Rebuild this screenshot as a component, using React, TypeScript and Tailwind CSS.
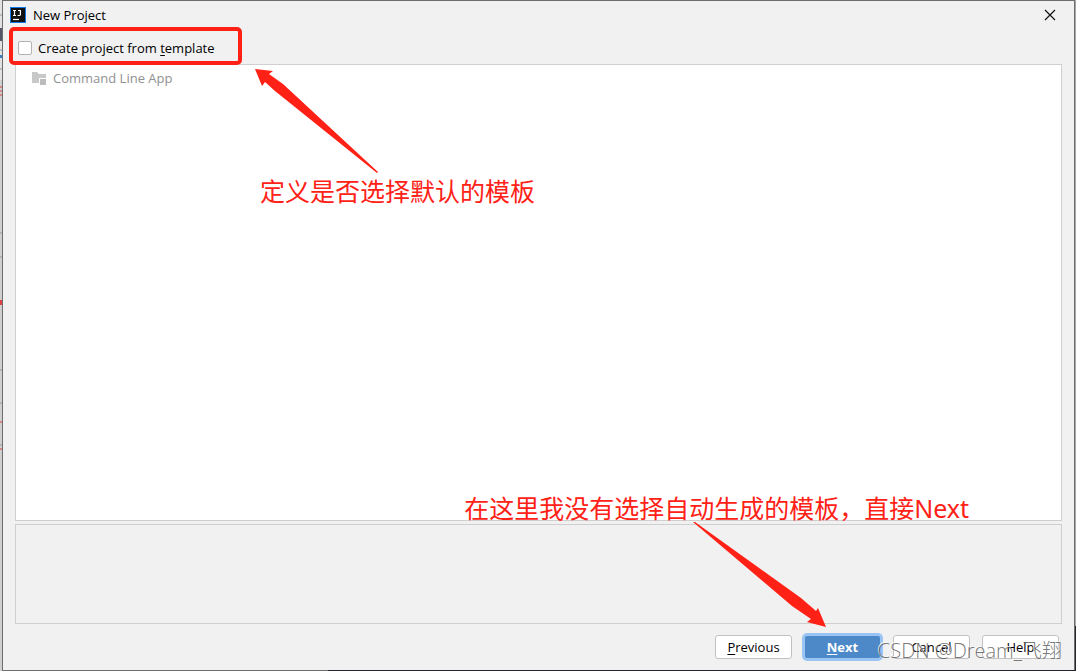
import React from 'react';

const Mnemonic: React.FC<{ text: string; at: number }> = ({ text, at }) => (
  <span>
    {text.slice(0, at)}
    <span className="underline underline-offset-2">{text[at]}</span>
    {text.slice(at + 1)}
  </span>
);

const IdeaLogo: React.FC = () => (
  <svg width="16" height="16" viewBox="0 0 16 16" aria-hidden="true">
    <rect width="16" height="16" fill="#0f7bea" />
    <rect x="1" y="1" width="14" height="14" fill="#111" />
    <path d="M3 3.5h3M4.5 3.5v5M3 8.5h3M8 3.5h3M10.4 3.5v4q0 1-1 1H7.5" fill="none" stroke="#fff" strokeWidth="1.2" />
    <path d="M3 12.5h6" stroke="#fff" strokeWidth="1.2" />
  </svg>
);

const ModuleIcon: React.FC = () => (
  <svg width="16" height="16" viewBox="0 0 16 16" aria-hidden="true">
    <path d="M1 2h5l2 2h7v4H8v5H1z" fill="#c8c8c8" />
    <rect x="9" y="9" width="6" height="6" fill="#bcbcbc" />
  </svg>
);

const plainButton =
  'h-6 w-[77px] rounded-[3px] border border-[#c2c2c2] bg-white flex items-center justify-center';

export default function App() {
  const [fromTemplate, setFromTemplate] = React.useState<boolean>(false);

  return (
    <div className="relative flex h-screen min-h-96 overflow-hidden bg-[#f1f1f1] font-['Open_Sans','Noto_Sans_CJK_SC',sans-serif] text-[13px] leading-4 text-black">
      {/* Slice of the editor behind the dialog */}
      <svg className="w-[2px] shrink-0 bg-[#cfcfcf]" width="2" height="671" aria-hidden="true">
        <path d="M0 0h2v80H0z" fill="#e2e2e2" />
        <path d="M0 15h2M0 50h2M0 69h2M0 233h2M0 257h2M0 370h2M0 403h2M0 445h2" stroke="#9a9a9a" />
        <path d="M0 28h2v13H0z" fill="#55556a" />
        <path d="M0 55h2v3H0z" fill="#3c7fc0" />
        <path d="M0 87h2M0 91h2M0 95h2M0 422h2M0 449h2" stroke="#e04040" />
        <path d="M0 300h2v5H0z" fill="#e04040" />
      </svg>

      <main className="flex min-w-0 flex-1 flex-col border border-[#6e6e6e]">
        <header className="flex h-7 shrink-0 items-center gap-[7px] pl-[7px]">
          <IdeaLogo />
          <h1>New Project</h1>
          <button aria-label="Close" className="ml-auto mr-4 flex h-4 w-4 items-center justify-center">
            <svg width="12" height="12" viewBox="0 0 12 12" aria-hidden="true">
              <path d="M1 1l10 10M11 1L1 11" stroke="#111" strokeWidth="1.2" />
            </svg>
          </button>
        </header>

        <div className="relative flex h-[35px] shrink-0 items-center pl-[15px] pt-0.5">
          <label className="flex items-center gap-1.5">
            <input
              type="checkbox"
              checked={fromTemplate}
              onChange={(e) => setFromTemplate(e.target.checked)}
              className="h-3.5 w-3.5 appearance-none rounded-[2px] border border-[#b3b3b3] bg-white checked:bg-[#4d89c9]"
            />
            <Mnemonic text="Create project from template" at={20} />
          </label>
          <div className="pointer-events-none absolute -top-0.5 left-1.5 h-[38px] w-[233px] rounded-[5px] border-4 border-[#ff2116]" />
        </div>

        <section className="mx-3 flex-1 border border-[#cfcfcf] bg-white">
          <ul>
            <li className="flex items-center gap-1.5 px-[15px] py-[5px] text-[#919191]">
              <ModuleIcon />
              Command Line App
            </li>
          </ul>
        </section>
        <section className="mx-3 mt-[3px] h-[100px] shrink-0 border border-[#cfcfcf]" />

        <footer className="flex h-[46px] shrink-0 items-center justify-end pr-[15px]">
          <button className={plainButton}>
            <Mnemonic text="Previous" at={0} />
          </button>
          <button className="ml-2.5 mr-2.5 flex h-7 w-[81px] items-center justify-center rounded-[5px] border-[3px] border-[#9ac4f4] bg-[#4d89c9] font-bold text-white">
            <Mnemonic text="Next" at={0} />
          </button>
          <button className={plainButton}>Cancel</button>
          <button className={`${plainButton} ml-3`}>Help</button>
        </footer>
      </main>

      {/* Desktop edge showing at the right and below */}
      <div className="flex w-px shrink-0 flex-col">
        <div className="flex-1 bg-[#a8a8a8]" />
        <div className="h-[45px] bg-[#24252d]" />
      </div>
      <div className="absolute bottom-0 left-[328px] right-0 h-px bg-[#24252d]" />

      {/* Annotations drawn over the dialog */}
      <svg className="pointer-events-none absolute left-[254px] top-[67px]" width="126" height="107" aria-hidden="true">
        <path d="M1 2L19 4L15 7L29 17L124 105L123 106L21 24L11 15L8 19Z" fill="#ff2116" />
      </svg>
      <p className="absolute left-[260px] top-[173px] font-['Noto_Sans','Noto_Sans_CJK_SC',sans-serif] text-[25px] leading-9 whitespace-nowrap text-[#ff2116]">
        定义是否选择默认的模板
      </p>
      <p className="absolute bottom-[145px] right-[107px] font-['Noto_Sans','Noto_Sans_CJK_SC',sans-serif] text-[25px] leading-9 whitespace-nowrap text-[#ff2116]">
        在这里我没有选择自动生成的模板，直接Next
      </p>
      <svg className="pointer-events-none absolute bottom-[43px] right-[249px]" width="134" height="107" aria-hidden="true">
        <path d="M0 1L2 1L108 77L123 90L125 87L133 106L114 101L118 98L99 85Z" fill="#ff2116" />
      </svg>
      <p className="pointer-events-none absolute bottom-2 right-[14px] text-[20px] font-light leading-6 whitespace-nowrap text-[#555555]/80 [text-shadow:-1px_-1px_0_#ffffffcc]">
        CSDN @Dream_飞翔
      </p>
    </div>
  );
}
